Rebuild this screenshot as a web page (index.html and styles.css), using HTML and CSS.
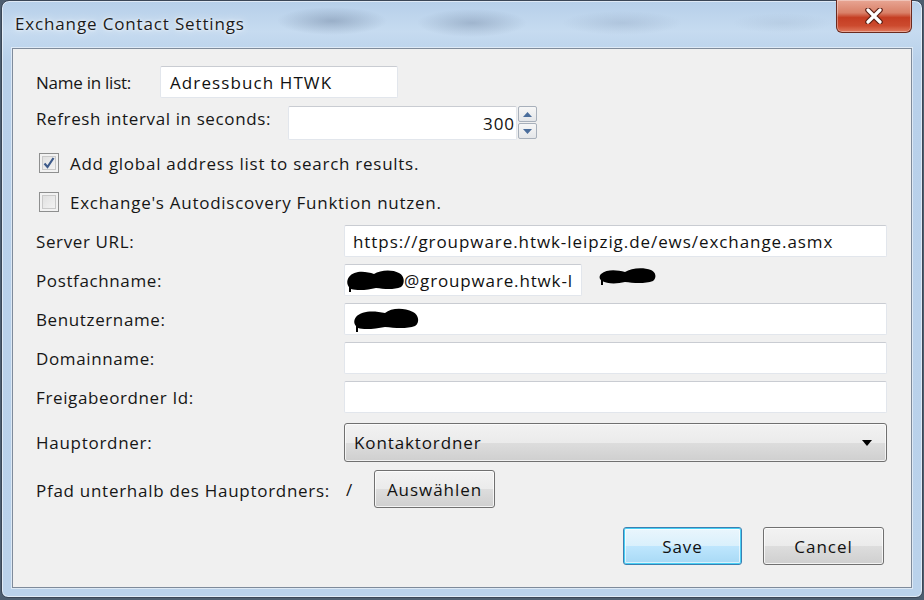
FILE: index.html
```html
<!DOCTYPE html>
<html>
<head>
<meta charset="utf-8">
<link rel="stylesheet" href="styles.css">
</head>
<body>
<div class="window">
  <div class="titlebar">
    <span class="title">Exchange Contact Settings</span>
    <div class="close">
      <svg width="20" height="16" viewBox="0 0 20 16"><path d="M4 2 L16 14 M16 2 L4 14" stroke="#5a1d12" stroke-width="5.5" stroke-linecap="round"/><path d="M4 2 L16 14 M16 2 L4 14" stroke="#ffffff" stroke-width="3.2" stroke-linecap="round"/></svg>
    </div>
  </div>
  <div class="client">
    <div class="row r-name">
      <span class="lbl lbl-name">Name in list:</span>
      <div class="input in-name">Adressbuch HTWK</div>
    </div>
    <div class="row r-refresh">
      <span class="lbl lbl-refresh">Refresh interval in seconds:</span>
      <div class="input in-refresh">300</div>
      <div class="spin">
        <div class="spin-btn"><svg width="9" height="5" viewBox="0 0 9 5"><path d="M0 5 L4.5 0 L9 5Z" fill="#4a6d9c"/></svg></div>
        <div class="spin-btn"><svg width="9" height="5" viewBox="0 0 9 5"><path d="M0 0 L9 0 L4.5 5Z" fill="#4a6d9c"/></svg></div>
      </div>
    </div>
    <div class="row r-check1">
      <span class="cbox checked"><svg width="14" height="14" viewBox="0 0 14 14"><path d="M2.5 7.5 L5.5 11 L11.5 2" fill="none" stroke="#3d5a8a" stroke-width="2.2"/></svg></span>
      <span class="cl">Add global address list to search results.</span>
    </div>
    <div class="row r-check2">
      <span class="cbox"></span>
      <span class="cl">Exchange's Autodiscovery Funktion nutzen.</span>
    </div>
    <div class="form">
      <span class="lbl">Server URL:</span>
      <div class="input">https://groupware.htwk-leipzig.de/ews/exchange.asmx</div>

      <span class="lbl">Postfachname:</span>
      <div class="postfach">
        <div class="input in-postfach"><svg class="blot" width="60" height="24" viewBox="0 0 60 24"><path d="M3 9 C8 2 20 3 28 6 C34 2 46 1 53 5 C59 8 59 16 55 19 C48 22 38 21 30 20 C22 22 12 23 5 21 C1 18 0 13 3 9Z" fill="#000"/><path d="M4 18 L4 24" stroke="#000" stroke-width="2"/></svg>@groupware.htwk-l</div>
        <svg class="blot2" width="58" height="20" viewBox="0 0 58 20"><path d="M2 8 C8 3 18 4 26 6 C32 2 44 1 52 4 C57 6 58 12 54 15 C46 18 34 17 26 16 C18 18 8 18 3 15 C0 13 0 10 2 8Z" fill="#000"/><path d="M3 13 L3 19" stroke="#000" stroke-width="2"/></svg>
      </div>

      <span class="lbl">Benutzername:</span>
      <div class="input"><svg class="blot" width="68" height="26" viewBox="0 0 68 26"><path d="M3 11 C9 4 22 5 32 7 C38 2 50 1 60 6 C66 9 67 17 62 20 C54 23 42 22 32 21 C22 23 11 24 5 22 C1 19 0 15 3 11Z" fill="#000"/><path d="M4 19 L4 26" stroke="#000" stroke-width="2"/></svg></div>

      <span class="lbl">Domainname:</span>
      <div class="input"></div>

      <span class="lbl">Freigabeordner Id:</span>
      <div class="input"></div>

      <span class="lbl lbl-cond">Hauptordner:</span>
      <div class="select"><span>Kontaktordner</span><svg width="10" height="6" viewBox="0 0 10 6"><path d="M0 0 L10 0 L5 6Z" fill="#000"/></svg></div>

      <span class="lbl lbl-cond">Pfad unterhalb des Hauptordners:</span>
      <div class="path"><span class="slash">/</span><div class="btn btn-pick">Auswählen</div></div>
    </div>
    <div class="actions">
      <div class="btn btn-save">Save</div>
      <div class="btn btn-cancel">Cancel</div>
    </div>
  </div>
</div>
</body>
</html>
```
FILE: styles.css
```css
html, body {
  margin: 0;
  padding: 0;
}
body {
  width: 924px;
  height: 600px;
  overflow: hidden;
  background: #4d5e70;
  font-family: "Open Sans", "Noto Sans", sans-serif;
  font-size: 17px;
  color: #111;
}
.window {
  box-sizing: border-box;
  margin: 0 1px;
  height: 598px;
  border: 1px solid #3a4656;
  border-radius: 8px 8px 7px 7px;
  background:
    radial-gradient(ellipse 55px 14px at 330px 20px, rgba(80,100,130,0.35), transparent),
    radial-gradient(ellipse 55px 14px at 470px 22px, rgba(80,100,130,0.3), transparent),
    radial-gradient(ellipse 60px 12px at 620px 22px, rgba(110,130,160,0.22), transparent),
    radial-gradient(ellipse 50px 10px at 780px 22px, rgba(140,160,185,0.18), transparent),
    linear-gradient(180deg, #b6cfe9 0%, #c6dbf0 30px, #b8d0ea 60px, #bad2eb 100%);
  padding: 0 10px 9px 10px;
  display: flex;
  flex-direction: column;
  box-shadow: inset 0 0 0 1px rgba(255,255,255,0.55);
}
.titlebar {
  height: 47px;
  flex: none;
  display: flex;
  justify-content: space-between;
  align-items: flex-start;
}
.title {
  margin-top: 11px;
  padding-left: 3px;
  font-size: 17px;
  letter-spacing: 0.85px;
  color: #1b1b1b;
  text-shadow: 0 0 8px rgba(255,255,255,0.9), 0 0 3px rgba(255,255,255,0.9);
}
.close {
  box-sizing: border-box;
  width: 76px;
  height: 33px;
  margin-top: -1px;
  border: 1px solid #6b2a1e;
  border-top: none;
  border-radius: 0 0 6px 6px;
  background: linear-gradient(180deg, #e8a694 0%, #d98068 40%, #c53d22 55%, #cc4a2e 80%, #e07a5e 100%);
  box-shadow: inset 0 0 0 1px rgba(255,255,255,0.35);
  display: flex;
  align-items: center;
  justify-content: center;
}
.client {
  flex: 1;
  box-sizing: border-box;
  background: #f0f0f0;
  border: 1px solid #7f8b9b;
  box-shadow: 0 0 0 1px rgba(255,255,255,0.5);
  padding: 17px 24px 0 23px;
  display: flex;
  flex-direction: column;
}
.row {
  display: flex;
  align-items: center;
}
.lbl {
  color: #161616;
  letter-spacing: 0.62px;
  white-space: nowrap;
}
.input {
  box-sizing: border-box;
  height: 32px;
  background: #fff;
  border: 1px solid #e2e6ec;
  border-top-color: #c9ccd2;
  border-radius: 2px;
  padding: 0 8px;
  display: flex;
  align-items: center;
  white-space: nowrap;
  overflow: hidden;
  color: #111;
  letter-spacing: 0.93px;
}
.r-name { height: 32px; }
.lbl-name { width: 124px; letter-spacing: -0.25px; }
.in-name { width: 238px; padding-left: 9px; letter-spacing: 1.1px; }
.r-refresh { height: 34px; margin-top: 8px; }
.lbl-refresh { width: 252px; align-self: flex-start; margin-top: 1px; }
.in-refresh { width: 229px; height: 34px; justify-content: flex-end; padding-right: 1px; }
.spin {
  display: flex;
  flex-direction: column;
  gap: 1px;
  margin-left: 1px;
  height: 34px;
}
.spin-btn {
  box-sizing: border-box;
  width: 19px;
  height: 16px;
  border: 1px solid #a8b0bb;
  border-radius: 2px;
  background: linear-gradient(180deg, #f7f7f7, #e4e6e9);
  display: flex;
  align-items: center;
  justify-content: center;
}
.r-check1 { margin-top: 13px; height: 20px; padding-left: 3px; }
.r-check2 { margin-top: 19px; height: 20px; padding-left: 3px; }
.cbox {
  box-sizing: border-box;
  width: 20px;
  height: 20px;
  border: 1px solid #8e8f8f;
  background: linear-gradient(135deg, #dcdcdc, #f7f7f7);
  box-shadow: inset 0 0 0 2px #f2f2f2, inset 0 0 0 3px #c9c9c9;
  display: flex;
  align-items: center;
  justify-content: center;
  margin-right: 11px;
}
.cl {
  color: #161616;
  letter-spacing: 0.73px;
  white-space: nowrap;
}
.form {
  margin-top: 13px;
  display: grid;
  grid-template-columns: 308px 1fr;
  row-gap: 7px;
  align-items: center;
}
.postfach {
  display: flex;
  align-items: center;
}
.in-postfach { width: 238px; padding-left: 1px; letter-spacing: 0.85px; }
.blot { flex: none; margin-right: -2px; }
.blot2 { margin-left: 17px; margin-top: -8px; }
.select {
  box-sizing: border-box;
  height: 39px;
  margin-top: 3px;
  border: 1px solid #707070;
  border-radius: 3px;
  background: linear-gradient(180deg, #f2f2f2 0%, #ebebeb 50%, #dddddd 51%, #cfcfcf 100%);
  box-shadow: inset 0 0 0 1px rgba(255,255,255,0.7);
  display: flex;
  align-items: center;
  justify-content: space-between;
  padding: 0 14px 0 9px;
  letter-spacing: 0.88px;
}
.lbl-cond { margin-top: 3px; letter-spacing: 0.72px; }
.path {
  display: flex;
  align-items: center;
  margin-top: 1px;
}
.slash {
  width: 30px;
  padding-left: 2px;
  box-sizing: border-box;
}
.btn {
  box-sizing: border-box;
  border: 1px solid #707070;
  border-radius: 3px;
  background: linear-gradient(180deg, #f2f2f2 0%, #ebebeb 50%, #dddddd 51%, #cfcfcf 100%);
  box-shadow: inset 0 0 0 1px rgba(255,255,255,0.75);
  display: flex;
  align-items: center;
  justify-content: center;
  color: #111;
  letter-spacing: 0.95px;
}
.btn-pick { width: 121px; height: 38px; }
.actions {
  display: flex;
  justify-content: flex-end;
  gap: 21px;
  margin-top: 19px;
  padding-right: 3px;
}
.btn-save {
  width: 119px;
  height: 38px;
  border-color: #3c7fb1;
  box-shadow: inset 0 0 0 1px #48d0f5, inset 0 0 0 2px rgba(255,255,255,0.6);
  background: linear-gradient(180deg, #eaf6fd 0%, #d9f0fc 50%, #bee6fd 51%, #a7d9f5 100%);
}
.btn-cancel { width: 121px; height: 38px; }
```
